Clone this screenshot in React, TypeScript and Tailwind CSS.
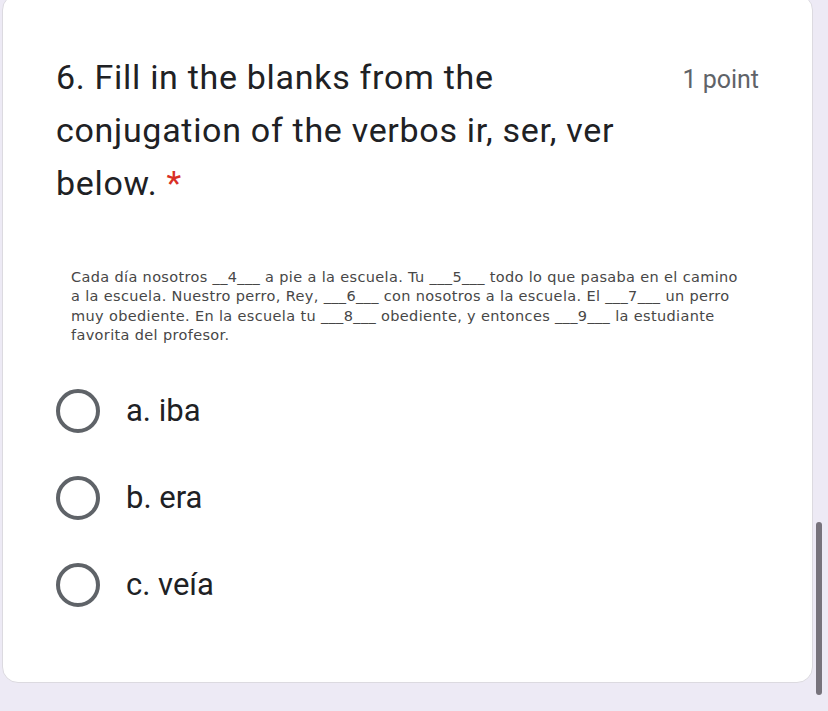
const passage = [
  'Cada día nosotros __4___ a pie a la escuela. Tu ___5___ todo lo que pasaba en el camino',
  'a la escuela. Nuestro perro, Rey, ___6___ con nosotros a la escuela. El ___7___ un perro',
  'muy obediente. En la escuela tu ___8___ obediente, y entonces ___9___ la estudiante',
  'favorita del profesor.',
]

const options = ['a. iba', 'b. era', 'c. veía']

export default function App() {
  return (
    <div className="relative h-[711px] w-[828px] overflow-hidden bg-[#edeaf5] font-[family-name:Roboto,sans-serif]">
      <div className="-mt-[6px] ml-[2px] h-[689px] w-[811px] rounded-[16px] border border-[#dcdae0] bg-white">
        <div className="flex items-start justify-between pl-[53px] pr-[53px] pt-[56px]">
          <h2 className="text-[34px] leading-[53px] tracking-[0.7px] text-[#202124]">
            6. Fill in the blanks from the
            <br />
            conjugation of the verbos ir, ser, ver
            <br />
            below. <span className="text-[#d93025]">*</span>
          </h2>
          <span className="pt-[12px] text-[25px] leading-[34px] text-[#5f6368]">1 point</span>
        </div>

        <div className="mt-[58px] pl-[68px] font-[family-name:'DejaVu_Sans',sans-serif] text-[14.5px] leading-[19.4px] tracking-[0.35px] text-[#474747]">
          {passage.map((line, i) => (
            <div key={i} className="whitespace-pre">
              {line}
            </div>
          ))}
        </div>

        <div className="mt-[43px] flex flex-col gap-[43px] pl-[53px]">
          {options.map((opt) => (
            <label key={opt} className="flex items-center gap-[26px]">
              <span className="h-[44px] w-[44px] rounded-full border-[4px] border-[#5f6368]" />
              <span className="text-[31px] leading-[44px] text-[#202124]">{opt}</span>
            </label>
          ))}
        </div>
      </div>

      <div className="absolute left-[816px] top-[522px] h-[173px] w-[6px] rounded-full bg-[#77737c]" />
    </div>
  )
}
